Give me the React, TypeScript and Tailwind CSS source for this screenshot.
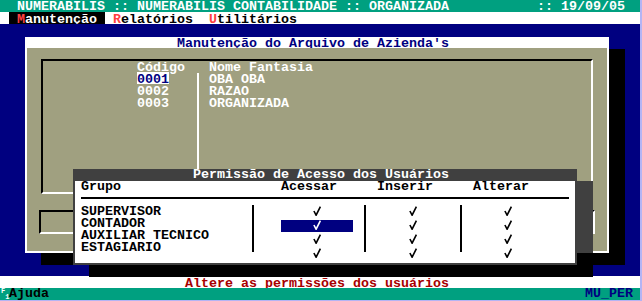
const grupos = ["SUPERVISOR", "CONTADOR", "AUXILIAR TECNICO", "ESTAGIARIO"];
const codigos = ["0001", "0002", "0003"];
const nomes = ["OBA OBA", "RAZAO", "ORGANIZADA"];

function Check({ white = false }: { white?: boolean }) {
    return (
        <svg width="8" height="10" viewBox="0 0 8 10" className="block mt-[2px]">
            <path
                d="M0.9 5 L3.1 9.2 L7.4 0.6"
                fill="none"
                stroke={white ? "#ffffff" : "#000000"}
                strokeWidth="1.6"
            />
        </svg>
    );
}

function CheckColumn({ width, offset, highlight }: { width: string; offset: string; highlight?: number }) {
    return (
        <div className={width}>
            {grupos.map((g, i) =>
                i === highlight ? (
                    <div key={g} className="h-[12px]">
                        <div className="ml-[27px] mt-[1px] w-[72px] h-[12px] bg-[#000080] pl-[32px]">
                            <Check white />
                        </div>
                    </div>
                ) : (
                    <div key={g} className={`h-[12px] ${offset}`}>
                        <Check />
                    </div>
                )
            )}
        </div>
    );
}

function MainWindow() {
    return (
        <div className="absolute left-[25px] top-[13px] w-[584px] h-[216px] bg-white px-[2px] pb-[2px] flex flex-col shadow-[16px_12px_0_0_#000]">
            <div className="h-[11px] pl-[150px] leading-[14px] text-[#000080]">
                Manutenção do Arquivo de Azienda's
            </div>
            <div className="flex-1 bg-[#a0a080] pt-[11px]">
                {/* lista de empresas */}
                <div className="ml-[14px] w-[552px] h-[135px] border-2 border-t-black border-l-black border-b-white border-r-white">
                    <div className="flex h-full text-white">
                        <div className="w-[154px] pl-[94px] -mt-[1px]">
                            <div className="h-[12px] leading-[15px]">Código</div>
                            {codigos.map((c, i) => (
                                <div
                                    key={c}
                                    className={
                                        i === 0
                                            ? "h-[12px] w-[32px] leading-[15px] bg-white text-[#000080]"
                                            : "h-[12px] leading-[15px]"
                                    }
                                >
                                    {c}
                                </div>
                            ))}
                        </div>
                        <div className="mt-[12px] w-[2px] bg-white" />
                        <div className="pl-[10px] -mt-[1px]">
                            <div className="h-[12px] leading-[15px]">Nome Fantasia</div>
                            {nomes.map((n) => (
                                <div key={n} className="h-[12px] leading-[15px]">
                                    {n}
                                </div>
                            ))}
                        </div>
                    </div>
                </div>
                <div className="mt-[16px] ml-[12px] w-[556px] h-[24px] border-2 border-t-black border-l-black border-b-white border-r-white" />
            </div>
        </div>
    );
}

function PermissionDialog() {
    return (
        <div className="absolute left-[73px] top-[145px] w-[504px] h-[96px] bg-white border-2 border-t-0 border-[#404040] flex flex-col shadow-[16px_12px_0_0_#000]">
            <div className="h-[12px] shrink-0 bg-[#404040] text-white pl-[118px] leading-[12px]">
                Permissão de Acesso dos Usuários
            </div>
            <div className="flex-1 text-black">
                <div className="flex h-[12px] leading-[12px]">
                    <span className="w-[206px] pl-[6px]">Grupo</span>
                    <span className="w-[96px]">Acessar</span>
                    <span className="w-[96px]">Inserir</span>
                    <span>Alterar</span>
                </div>
                <div className="mt-[4px] ml-[6px] w-[488px] h-[2px] bg-black" />
                <div className="mt-[5px] flex h-[48px]">
                    <div className="w-[177px] pl-[6px]">
                        {grupos.map((g) => (
                            <div key={g} className="h-[12px] leading-[15px]">
                                {g}
                            </div>
                        ))}
                    </div>
                    <div className="mt-[1px] w-[2px] bg-black" />
                    <CheckColumn width="w-[110px]" offset="pl-[59px]" highlight={1} />
                    <div className="mt-[1px] w-[2px] bg-black" />
                    <CheckColumn width="w-[94px]" offset="pl-[43px]" />
                    <div className="mt-[1px] w-[2px] bg-black" />
                    <CheckColumn width="flex-1" offset="pl-[42px]" />
                </div>
            </div>
        </div>
    );
}

export default function App() {
    return (
        <div className="w-[642px] h-[301px] bg-[#b4b4f4] font-['Liberation_Mono',monospace] font-bold text-[13.33px] leading-[12px] whitespace-pre">
            <div className="w-[640px] h-[300px] flex flex-col">
                {/* barra de título */}
                <div className="h-[12px] shrink-0 bg-[#00a080] text-white flex justify-between pl-[17px] pr-[15px]">
                    <span className="leading-[14px]">NUMERABILIS :: NUMERABILIS CONTABILIDADE :: ORGANIZADA</span>
                    <span className="leading-[14px]">:: 19/09/05</span>
                </div>

                {/* menu */}
                <div className="h-[12px] shrink-0 bg-white flex pl-[9px] text-black">
                    <span className="h-[12px] bg-black text-white px-[8px] leading-[15px]">
                        <span className="text-[#ff4040]">M</span>anutenção
                    </span>
                    <span className="ml-[8px] leading-[15px]">
                        <span className="text-[#ff4040]">R</span>elatórios
                    </span>
                    <span className="ml-[16px] leading-[15px]">
                        <span className="text-[#ff4040]">U</span>tilitários
                    </span>
                </div>

                {/* área de trabalho */}
                <div className="relative flex-1 bg-[#000080]">
                    <MainWindow />
                    <PermissionDialog />
                    {/* sombra do diálogo sobre a janela */}
                    <div className="absolute left-[577px] top-[157px] w-[16px] h-[72px] bg-[#404040]" />
                </div>

                {/* mensagem */}
                <div className="h-[12px] shrink-0 bg-white text-[#a80000] pl-[185px] leading-[15px]">
                    Altere as permissões dos usuários
                </div>

                {/* rodapé */}
                <div className="h-[12px] shrink-0 bg-[#00a080] flex">
                    <span className="w-[9px] h-[12px] flex pl-[1px] text-white text-[7px] leading-[6px]">
                        <span className="self-start">F</span>
                        <span className="self-end">1</span>
                    </span>
                    <span className="text-black leading-[12px]">Ajuda</span>
                    <span className="ml-auto pr-[7px] text-[#000080] leading-[12px]">MU_PER</span>
                </div>
            </div>
        </div>
    );
}
